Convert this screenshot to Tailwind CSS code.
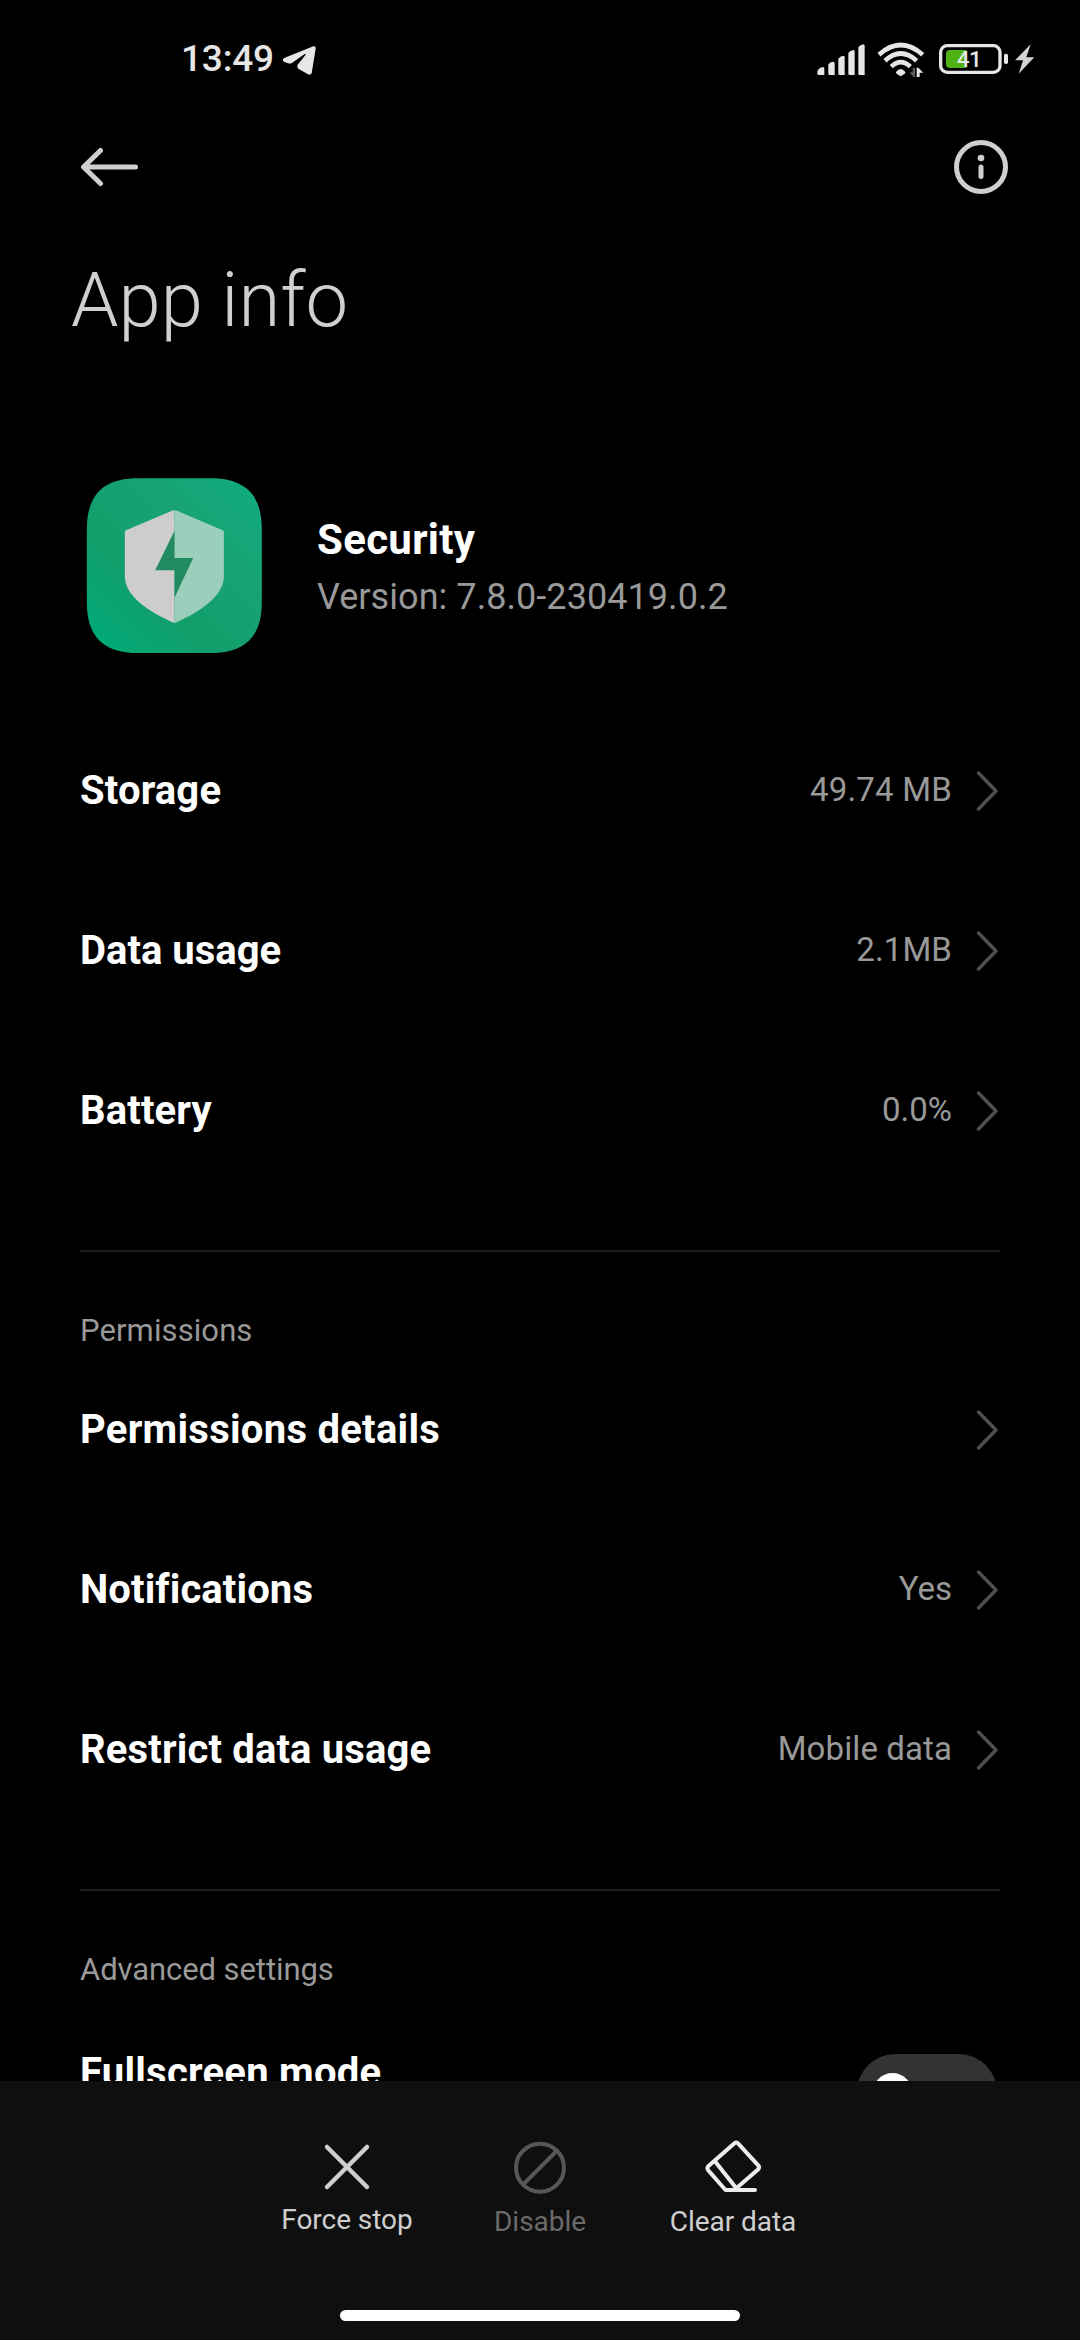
<!DOCTYPE html>
<html lang="en">
<head>
<meta charset="utf-8">
<title>App info</title>
<script src="https://cdn.jsdelivr.net/npm/@tailwindcss/browser@4"></script>
</head>
<body class="bg-black">
<svg class="hidden">
  <symbol id="chevron" viewBox="0 0 22 40"><path d="M2.5 2 L20 20 L2.5 38" fill="none" stroke="#4f4f4f" stroke-width="3.4" stroke-linecap="round" stroke-linejoin="round"/></symbol>
</svg>
<div class="flex h-[2340px] w-[1080px] flex-col overflow-hidden bg-black font-[Roboto,sans-serif] text-white">

  <header class="flex h-[100px] shrink-0 items-start justify-between pl-[181px] pr-[20px] pt-[20px]">
    <div class="flex text-[#e6e6e6]">
      <span class="w-[101px] whitespace-nowrap text-[37px] leading-[77px] font-medium tracking-[-0.2px]">13:49</span>
      <svg class="mt-[25px] h-[31px] w-[35px]" viewBox="366 75 105 93" fill="#e6e6e6"><path d="M369 118 Q370 115 378 112 L460 79 Q468 77 467 86 L455 160 Q452 166 444 163 L416 147 Q409 141 414 133 L437 104 Q438 100 433 103 L396 129 Q390 132 384 130 L373 126 Q367 123 369 118Z"/></svg>
    </div>
    <svg class="h-[80px] w-[260px]" viewBox="0 0 780 240">
      <g fill="#e6e6e6">
        <path d="M52 155 Q53 149 60 144 L68 141 Q73 141 73 146 V165 H56 Q52 165 52 160Z"/>
        <path d="M85 133 Q90 126 99 125 Q104 125 104 130 V165 H89 Q85 165 85 161Z"/>
        <path d="M115 116 Q120 108 130 107 Q134 107 134 112 V165 H119 Q115 165 115 161Z"/>
        <path d="M145 99 Q150 91 160 90 Q164 90 164 95 V165 H149 Q145 165 145 161Z"/>
        <path d="M175 82 Q180 74 190 73 Q194 73 194 78 V165 H179 Q175 165 175 161Z"/>
        <path d="M288 156 Q302 138 316 156 Q317 159 314 161 L305 167 Q302 169 299 167 L290 161 Q287 159 288 156Z"/>
        <path d="M692 73 L645 121 H669 L656 161 L703 112 H679Z" fill="#d2d2d2"/>
        <rect x="612" y="101" width="12" height="31" rx="5"/>
        <path d="M350 171 V143 H355 L370 158 H359 V171Z"/>
        <path d="M345 171 V143 H338 V157 H328 L341 171Z" fill="#5c5c5c"/>
      </g>
      <g fill="none" stroke="#e6e6e6" stroke-width="14">
        <path d="M237 104 Q302 46 368 104"/>
        <path d="M255 122 Q302 79 350 122"/>
        <path d="M274 140 Q302 113 331 140"/>
      </g>
      <rect x="422" y="77" width="178" height="80" rx="20" fill="none" stroke="#e6e6e6" stroke-width="10"/>
      <path d="M450 90 H499 V144 H450 Q438 144 438 132 V102 Q438 90 450 90Z" fill="#4fb314"/>
      <text x="470" y="141" font-family="Roboto, sans-serif" font-size="68" font-weight="500" fill="#e6e6e6" textLength="76">41</text>
    </svg>
  </header>

  <nav class="flex h-[134px] shrink-0 items-center justify-between pl-[80px] pr-[71px]">
    <svg class="h-[40px] w-[60px]" viewBox="0 0 60 40" fill="none" stroke="#cfcfcf" stroke-width="5" stroke-linecap="round" stroke-linejoin="round"><path d="M20.5 3.5 L3.5 20 L20.5 36.5 M4 20 H55.500"/></svg>
    <svg class="h-[56px] w-[56px]" viewBox="0 0 56 56"><circle cx="28" cy="28" r="24.500" fill="none" stroke="#cfcfcf" stroke-width="5"/><circle cx="28" cy="19" r="3.300" fill="#cfcfcf"/><path d="M28 28 V37.500" stroke="#cfcfcf" stroke-width="5" stroke-linecap="round"/></svg>
  </nav>

  <h1 class="h-[244px] shrink-0 pl-[71px] pt-[14px] text-[76px] leading-[104px] font-light text-[#cfcfcf]">App info</h1>

  <section class="flex h-[233px] shrink-0 pl-[86px]">
    <svg class="h-[176px] w-[177px]" viewBox="49 55 530 528">
      <defs>
        <linearGradient id="tile" x1="0" y1="1" x2="1" y2="0"><stop offset="0.05" stop-color="#00ab78"/><stop offset="0.35" stop-color="#129e6b"/><stop offset="0.65" stop-color="#18a273"/><stop offset="1" stop-color="#11ac82"/></linearGradient>
      </defs>
      <path d="M51 210 C51 105 100 56 205 56 H421 C526 56 576 105 576 210 V426 C576 531 526 580 421 580 H205 C100 580 51 531 51 426Z" fill="url(#tile)"/>
      <path d="M314 152 Q308 152 303 155 L165 213 V350 C165 410 235 455 314 491Z" fill="#cdcdcd"/>
      <path d="M314 152 Q320 152 325 155 L462 213 V350 C462 410 393 455 314 491Z" fill="#9bcebb"/>
      <path d="M314 213 V295 H370 L314 414 V332 H256Z" fill="#218a61"/>
    </svg>
    <div class="flex flex-col pl-[54px] pt-[34px]">
      <span class="text-[42px] leading-[56px] font-bold tracking-[0.3px]">Security</span>
      <span class="text-[36px] leading-[58px] tracking-[0.06px] text-[#999999]">Version: 7.8.0-230419.0.2</span>
    </div>
  </section>

  <main class="flex h-[1370px] shrink-0 flex-col overflow-hidden px-[80px]">
    <div class="flex h-[160px] shrink-0 items-center pr-[2px]"><span class="grow text-[40px] font-bold tracking-[0.15px]">Storage</span><span class="pr-[24px] pb-[2px] text-[33px] tracking-[0.2px] text-[#999999]">49.74 MB</span><svg class="mb-px h-[40px] w-[22px]"><use href="#chevron"/></svg></div>
    <div class="flex h-[160px] shrink-0 items-center pr-[2px]"><span class="grow text-[40px] font-bold">Data usage</span><span class="pr-[24px] pb-[2px] text-[33px] tracking-[0.1px] text-[#999999]">2.1MB</span><svg class="mb-px h-[40px] w-[22px]"><use href="#chevron"/></svg></div>
    <div class="flex h-[160px] shrink-0 items-center pr-[2px]"><span class="grow text-[40px] font-bold tracking-[0.15px]">Battery</span><span class="pr-[24px] pb-[2px] text-[33px] text-[#999999]">0.0%</span><svg class="mb-px h-[40px] w-[22px]"><use href="#chevron"/></svg></div>
    <hr class="mt-[59px] h-[2px] shrink-0 border-0 bg-[#1c1c1c]">
    <h2 class="h-[98px] shrink-0 pt-[59px] text-[31px] leading-[40px] tracking-[0.1px] text-[#999999]">Permissions</h2>
    <div class="flex h-[160px] shrink-0 items-center pr-[2px]"><span class="grow text-[40px] font-bold tracking-[0.27px]">Permissions details</span><svg class="mb-px h-[40px] w-[22px]"><use href="#chevron"/></svg></div>
    <div class="flex h-[160px] shrink-0 items-center pr-[2px]"><span class="grow text-[40px] font-bold tracking-[0.1px] [font-variant-ligatures:common-ligatures]">Notifications</span><span class="pr-[24px] pb-[2px] text-[33px] text-[#999999]">Yes</span><svg class="mb-px h-[40px] w-[22px]"><use href="#chevron"/></svg></div>
    <div class="flex h-[160px] shrink-0 items-center pr-[2px]"><span class="grow text-[40px] font-bold tracking-[0.15px]">Restrict data usage</span><span class="pr-[24px] pb-[2px] text-[33px] tracking-[0.1px] text-[#999999]">Mobile data</span><svg class="mb-px h-[40px] w-[22px]"><use href="#chevron"/></svg></div>
    <hr class="mt-[59px] h-[2px] shrink-0 border-0 bg-[#1c1c1c]">
    <h2 class="h-[155px] shrink-0 pt-[59px] text-[31px] leading-[40px] tracking-[-0.08px] text-[#999999]">Advanced settings</h2>
    <div class="flex shrink-0 items-start pr-[3px] pt-[8px]">
      <span class="-mt-px grow text-[40px] leading-[40px] font-bold tracking-[0.25px]">Fullscreen mode</span>
      <span class="flex h-[76px] w-[140px] items-center rounded-full bg-[#333333] pl-[16px]"><span class="h-[39px] w-[39px] rounded-full bg-white"></span></span>
    </div>
  </main>

  <footer class="flex h-[259px] shrink-0 flex-col items-center justify-between bg-[#0f0f0f] pt-[56px] pb-[19px]">
    <div class="grid grid-cols-[193px_193px_193px] text-center text-[28px] leading-[36px] tracking-[-0.05px] text-[#cfcfcf]">
      <div class="flex flex-col items-center"><svg class="h-[60px] w-[60px]" viewBox="0 0 60 60" fill="none" stroke="#cfcfcf" stroke-width="4.500" stroke-linecap="round"><path d="M10 10 L50 50 M50 10 L10 50"/></svg><span class="pt-[5px]">Force stop</span></div>
      <div class="flex flex-col items-center text-[#6b6b6b]"><svg class="h-[60px] w-[60px]" viewBox="0 0 60 60" fill="none" stroke="#575757" stroke-width="4"><circle cx="30" cy="30.700" r="24"/><path d="M13 47.700 L47 13.700"/></svg><span class="pt-[7px]">Disable</span></div>
      <div class="flex flex-col items-center"><svg class="h-[60px] w-[60px]" viewBox="0 0 60 60" fill="none" stroke="#ececec" stroke-width="4" stroke-linecap="round" stroke-linejoin="round"><path d="M33 51.500 L55 32.500 Q57 30.500 55.200 28.300 L35 6.300 Q33.500 4.500 31.500 6.300 L5.500 29 Q3.500 31 5.200 33.200 L22.500 53 H52 M12.500 25 L33.500 51.500"/></svg><span class="pt-[7px]">Clear data</span></div>
    </div>
    <div class="h-[11px] w-[400px] rounded-full bg-white"></div>
  </footer>
</div>
</body>
</html>
